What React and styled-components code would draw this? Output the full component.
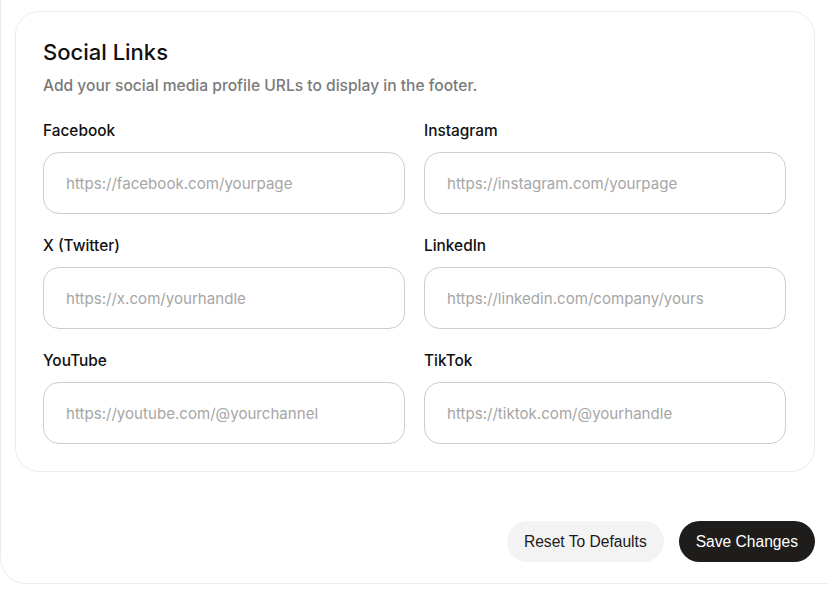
import React from 'react';
import styled, { createGlobalStyle } from 'styled-components';

const Global = createGlobalStyle`
  html, body {
    margin: 0;
    padding: 0;
    background: #fff;
    overflow: hidden;
  }
  body {
    font-family: Inter, "Noto Sans", sans-serif;
    color: #111;
  }
`;

const Panel = styled.div`
  width: 100%;
  box-sizing: border-box;
  padding: 11px 14px 21px 14px;
  border-left: 1px solid #ededed;
  border-bottom: 1px solid #ededed;
  border-bottom-left-radius: 26px;
`;

const Card = styled.section`
  width: 800px;
  box-sizing: border-box;
  padding: 26px 27px 27px 27px;
  border: 1px solid #ececec;
  border-radius: 24px;
  background: #fff;
`;

const Title = styled.h2`
  margin: 0;
  font-size: 22px;
  font-weight: 500;
  line-height: 28px;
  color: #111;
`;

const Subtitle = styled.p`
  margin: 10px 0 0;
  font-size: 15.6px;
  font-weight: 500;
  line-height: 20px;
  color: #7a7a7a;
`;

const Grid = styled.div`
  margin-top: 25px;
  display: grid;
  grid-template-columns: 362px 362px;
  column-gap: 19px;
  row-gap: 22px;
`;

const Field = styled.label`
  display: flex;
  flex-direction: column;
  gap: 11px;
`;

const Label = styled.span`
  font-size: 15.4px;
  font-weight: 500;
  line-height: 20px;
  color: #111;
`;

const Input = styled.input`
  height: 62px;
  box-sizing: border-box;
  padding: 0 22px;
  border: 1px solid #cdcdcd;
  border-radius: 16px;
  font-family: Inter, "Noto Sans", sans-serif;
  font-size: 15.1px;
  color: #111;
  background: #fff;
  outline: none;
  &::placeholder {
    color: #a6a6a6;
  }
`;

const Actions = styled.div`
  margin-top: 49px;
  width: 800px;
  display: flex;
  justify-content: flex-end;
  gap: 15px;
`;

const Button = styled.button`
  height: 41px;
  padding: 0 17px;
  border: none;
  border-radius: 21px;
  font-family: "Liberation Sans", Arial, sans-serif;
  font-size: 15.6px;
  cursor: pointer;
  background: ${(p) => (p.primary ? '#1f1c1c' : '#f3f3f3')};
  color: ${(p) => (p.primary ? '#fff' : '#1a1a1a')};
`;

const links = [
  { name: 'Facebook', ph: 'https://facebook.com/yourpage' },
  { name: 'Instagram', ph: 'https://instagram.com/yourpage' },
  { name: 'X (Twitter)', ph: 'https://x.com/yourhandle' },
  { name: 'LinkedIn', ph: 'https://linkedin.com/company/yours' },
  { name: 'YouTube', ph: 'https://youtube.com/@yourchannel' },
  { name: 'TikTok', ph: 'https://tiktok.com/@yourhandle' },
];

const App = () => {
  return (
    <>
      <Global />
      <Panel>
        <Card>
          <Title>Social Links</Title>
          <Subtitle>Add your social media profile URLs to display in the footer.</Subtitle>
          <Grid>
            {links.map((l) => (
              <Field key={l.name}>
                <Label>{l.name}</Label>
                <Input type="url" placeholder={l.ph} />
              </Field>
            ))}
          </Grid>
        </Card>
        <Actions>
          <Button>Reset To Defaults</Button>
          <Button primary>Save Changes</Button>
        </Actions>
      </Panel>
    </>
  );
};

export default App;
